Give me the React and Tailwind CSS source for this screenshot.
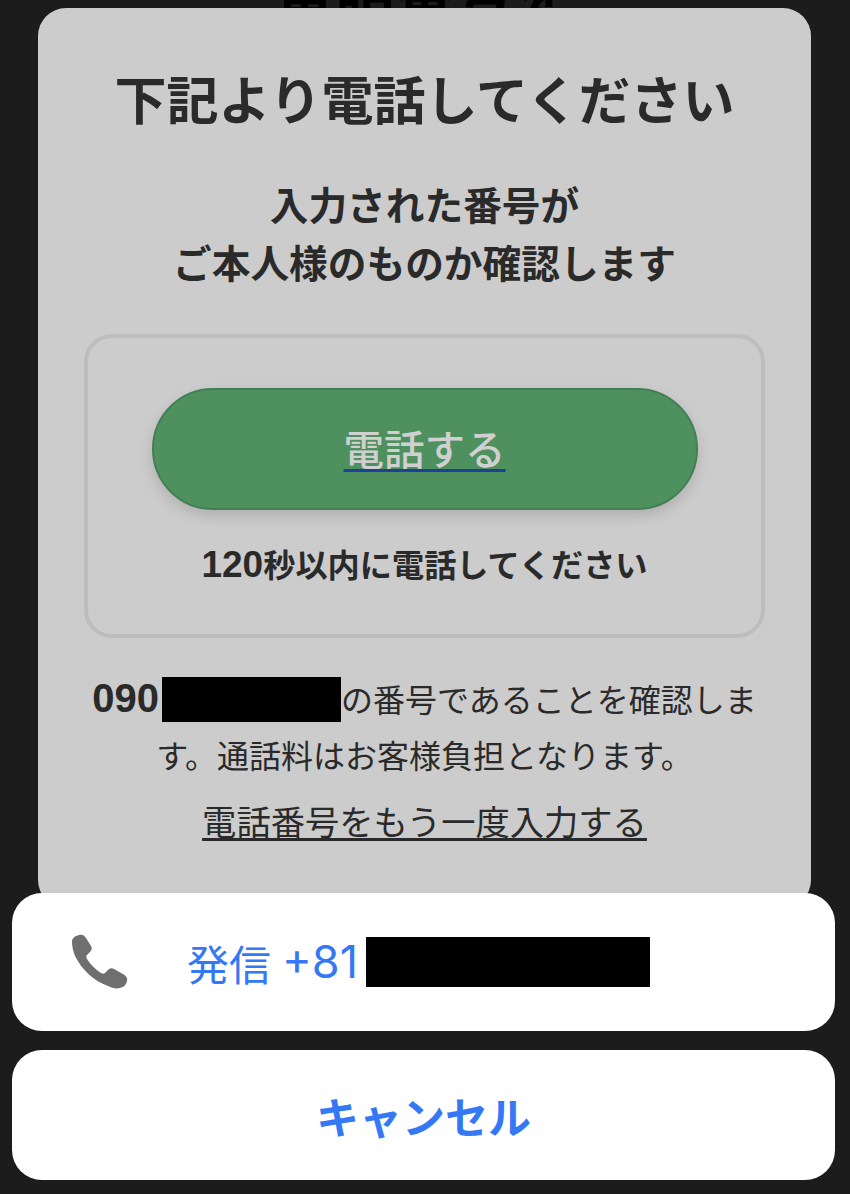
const jpFont = "font-['Noto_Sans_CJK_JP','Noto_Sans',sans-serif]";

function PhoneIcon() {
  return (
    <svg width="58" height="56" viewBox="0 0 58 56" className="shrink-0">
      <path
        d="M1 8C1 4 4 2 8 1c3-1 5 0 7 3l5 8c1 2 1 4-1 6l-3 3c-1 1-1 2 0 4 4 6 8 10 14 14 2 1 3 1 4 0l3-3c2-2 4-2 6-1l9 5c3 2 5 4 4 7-1 4-3 6-7 7-4 1-8 0-12-2C23 47 11 36 4 22 2 17 1 12 1 8z"
        fill="#6f6f6f"
      />
    </svg>
  );
}

export default function App() {
  return (
    <div className={`relative h-[1194px] w-[850px] overflow-hidden bg-[#1c1c1c] pt-2 ${jpFont}`}>
      {/* clipped heading of the page behind the dialog */}
      <div className="absolute -top-[46px] left-0 w-full text-center text-[60px] font-bold leading-[70px] text-black">
        電話番号を
      </div>

      <div className="relative mx-[38px] h-[900px] w-[773px] rounded-[28px] bg-[#cccccc] pt-[60px] text-[#2a2a2a]">
        <h1 className="text-center text-[52px] font-bold leading-[60px]">下記より電話してください</h1>
        <p className="mt-[46px] text-center text-[38.7px] font-bold leading-[58px]">
          入力された番号が
          <br />
          ご本人様のものか確認します
        </p>

        <div className="mx-[46px] mt-[44px] flex h-[304px] flex-col items-center rounded-[28px] border-4 border-[#bdbdbd] pt-[50px]">
          <a className="flex h-[122px] w-[546px] items-center justify-center rounded-full border-2 border-[#437f54] bg-[#4f905f] pb-[2px] text-[40.5px] font-medium text-[#d0d0d0] underline decoration-[#1e3f9a] decoration-[3px] underline-offset-[4px] shadow-[0_6px_14px_rgba(0,0,0,0.14)]">
            電話する
          </a>
          <p className="mt-[31px] text-[32.2px] font-bold leading-[44px]">
            <span className="font-['Liberation_Sans',sans-serif] text-[37px]">120</span>
            秒以内に電話してください
          </p>
        </div>

        <p className="mx-auto mt-[32px] w-[672px] text-center text-[32px] leading-[56px]">
          <span className="font-['Liberation_Sans',sans-serif] text-[40px] font-bold">090</span>
          <span className="ml-[3px] inline-block h-[45px] w-[179px] bg-black align-[-10px]" />
          の番号であることを確認します。通話料はお客様負担となります。
        </p>
        <div className="mt-[13px] text-center">
          <a className="text-[34.3px] leading-[50px] underline underline-offset-[3px]">電話番号をもう一度入力する</a>
        </div>
      </div>

      {/* action sheet */}
      <div className="absolute left-[12px] right-[15px] bottom-[14px] flex flex-col gap-[19px]">
        <div className="flex h-[138px] items-center rounded-[30px] bg-white pl-[59px] text-[#3478f6]">
          <PhoneIcon />
          <span className="ml-[58px] text-[42px]">発信</span>
          <span className="ml-[11px] font-['Inter',sans-serif] text-[45px]">+81</span>
          <span className="ml-[8px] h-[50px] w-[284px] bg-black" />
        </div>
        <div className="flex h-[130px] items-center justify-center rounded-[30px] bg-white text-[43px] font-bold text-[#3478f6]">
          キャンセル
        </div>
      </div>
    </div>
  );
}
